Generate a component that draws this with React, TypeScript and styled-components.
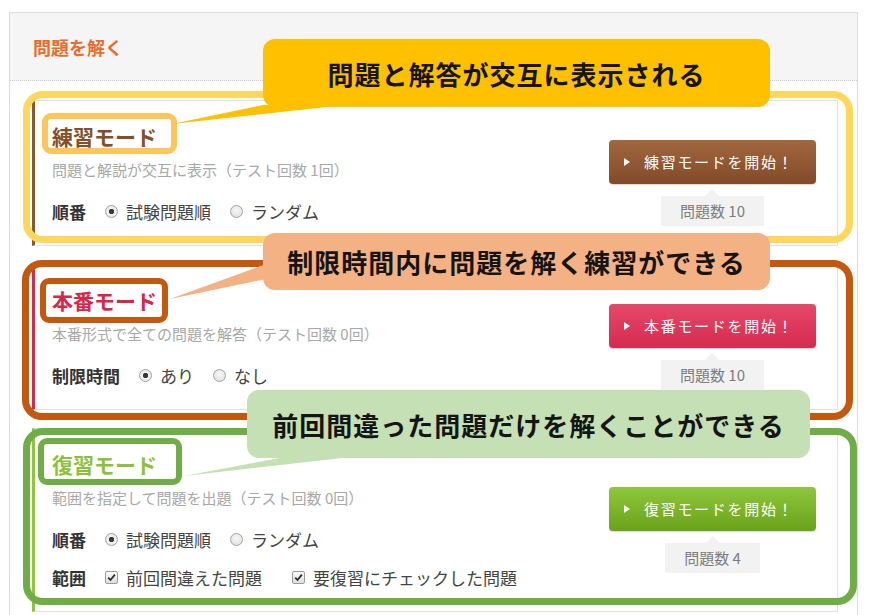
import React from "react";
import styled, { createGlobalStyle } from "styled-components";

const GlobalStyle = createGlobalStyle`
  html, body { margin: 0; padding: 0; background: #fff; }
  body {
    font-family: "Noto Sans CJK JP", "Noto Sans", sans-serif;
    color: #333;
  }
  *, *::before, *::after { box-sizing: border-box; }
`;

const Stage = styled.div`
  position: relative;
  width: 876px;
  height: 615px;
  overflow: hidden;
  padding: 12px 0 0 9px;
`;

const Panel = styled.section`
  width: 849px;
  height: 640px;
  border: 1px solid #dcdcdc;
  background: #fff;
`;

const PanelHeader = styled.header`
  height: 68px;
  display: flex;
  align-items: center;
  padding-left: 23px;
  background: #f5f5f5;
  border-bottom: 1px dotted #cdcdcd;
`;

const PanelTitle = styled.h2`
  margin: 0;
  font-size: 18px;
  line-height: 24px;
  font-weight: 700;
  color: #ea6c2c;
`;

const PanelBody = styled.div`
  padding: 19px 19px 0 22px;
`;

const ModeCard = styled.div<{ $accent: string }>`
  display: flex;
  justify-content: space-between;
  align-items: center;
  border: 1px solid #e1e1e1;
  border-left: 3px solid ${(p) => p.$accent};
  padding: 23px 21px 22px 17px;
  background: #fff;
  & + & {
    margin-top: 18px;
  }
`;

const ModeInfo = styled.div`
  display: flex;
  flex-direction: column;
`;

const ModeTitle = styled.h3<{ $color: string }>`
  margin: 0;
  font-size: 21px;
  line-height: 24px;
  font-weight: 700;
  color: ${(p) => p.$color};
`;

const ModeDesc = styled.p`
  margin: 12px 0 0;
  font-size: 15px;
  line-height: 20px;
  color: #a8a8a8;
`;

const OptionRow = styled.div`
  display: flex;
  align-items: center;
  height: 24px;
  margin-top: 19px;
  font-size: 17px;
  color: #444;
  & + & {
    margin-top: 14px;
  }
`;

const OptionLabel = styled.span`
  font-weight: 700;
  color: #333;
  margin-right: 19px;
`;

const Choice = styled.label<{ $space: number }>`
  display: flex;
  align-items: center;
  gap: 8px;
  margin-right: ${(p) => p.$space}px;
  white-space: nowrap;
`;

const Radio = styled.span<{ $on?: boolean }>`
  width: 13px;
  height: 13px;
  border-radius: 50%;
  border: 1px solid #a3a3a3;
  background: ${(p) =>
    p.$on
      ? "radial-gradient(circle, #3a3a3a 0 2.4px, #f3f3f3 3px, #e2e2e2 100%)"
      : "radial-gradient(circle at 50% 40%, #f7f7f7 0, #dcdcdc 100%)"};
  flex: none;
`;

const Check = styled.span`
  width: 13px;
  height: 13px;
  border-radius: 2px;
  border: 1px solid #9a9a9a;
  background: linear-gradient(#fbfbfb, #dedede);
  display: flex;
  align-items: center;
  justify-content: center;
  flex: none;
`;

const StartColumn = styled.div`
  display: flex;
  flex-direction: column;
  align-items: center;
  margin: 9px 0 -9px;
`;

const StartButton = styled.button<{ $from: string; $to: string }>`
  width: 207px;
  height: 44px;
  display: flex;
  align-items: center;
  gap: 14px;
  padding: 0 0 0 15px;
  border: none;
  border-radius: 4px;
  background: linear-gradient(${(p) => p.$from}, ${(p) => p.$to});
  box-shadow: 0 1px 1px rgba(0, 0, 0, 0.15);
  color: #fff;
  font-family: inherit;
  font-size: 15px;
  letter-spacing: 1.7px;
  cursor: pointer;
`;

const PlayMark = styled.span`
  width: 0;
  height: 0;
  border-left: 6px solid #fff;
  border-top: 4.5px solid transparent;
  border-bottom: 4.5px solid transparent;
`;

const CountTag = styled.div`
  position: relative;
  margin-top: 12px;
  height: 30px;
  padding: 0 19px;
  background: #f2f2f2;
  color: #7c7c7c;
  font-size: 15px;
  line-height: 30px;
  &::before {
    content: "";
    position: absolute;
    left: 50%;
    top: -7px;
    margin-left: -7px;
    border-left: 7px solid transparent;
    border-right: 7px solid transparent;
    border-bottom: 7px solid #f2f2f2;
  }
`;

/* ---------- annotation overlay ---------- */

const Ring = styled.div<{
  $x: number;
  $y: number;
  $w: number;
  $h: number;
  $c: string;
  $t: number;
  $r: number;
}>`
  position: absolute;
  left: ${(p) => p.$x}px;
  top: ${(p) => p.$y}px;
  width: ${(p) => p.$w}px;
  height: ${(p) => p.$h}px;
  border: ${(p) => p.$t}px solid ${(p) => p.$c};
  border-radius: ${(p) => p.$r}px;
  pointer-events: none;
`;

const Callout = styled.div<{
  $x: number;
  $y: number;
  $w: number;
  $h: number;
  $bg: string;
}>`
  position: absolute;
  left: ${(p) => p.$x}px;
  top: ${(p) => p.$y}px;
  width: ${(p) => p.$w}px;
  height: ${(p) => p.$h}px;
  background: ${(p) => p.$bg};
  border-radius: 12px;
  display: flex;
  align-items: center;
  justify-content: center;
  font-size: 26px;
  font-weight: 700;
  letter-spacing: 1px;
  color: #151515;
  white-space: nowrap;
`;

const TailLayer = styled.svg`
  position: absolute;
  left: 0;
  top: 0;
  pointer-events: none;
`;

const CheckIcon = () => (
  <svg width="9" height="9" viewBox="0 0 9 9">
    <path d="M1.2 4.6 L3.5 7 L7.9 1.6" fill="none" stroke="#2b2b2b" strokeWidth="1.8" />
  </svg>
);

type Mode = {
  accent: string;
  title: string;
  titleColor: string;
  desc: string;
  button: string;
  from: string;
  to: string;
  count: string;
  rows: React.ReactNode;
};

const modes: Mode[] = [
  {
    accent: "#8b5a2b",
    title: "練習モード",
    titleColor: "#84502a",
    desc: "問題と解説が交互に表示（テスト回数 1回）",
    button: "練習モードを開始！",
    from: "#a2673f",
    to: "#814a28",
    count: "問題数 10",
    rows: (
      <OptionRow>
        <OptionLabel>順番</OptionLabel>
        <Choice $space={19}>
          <Radio $on />
          試験問題順
        </Choice>
        <Choice $space={19}>
          <Radio />
          ランダム
        </Choice>
      </OptionRow>
    ),
  },
  {
    accent: "#d7284b",
    title: "本番モード",
    titleColor: "#d6274a",
    desc: "本番形式で全ての問題を解答（テスト回数 0回）",
    button: "本番モードを開始！",
    from: "#e6496b",
    to: "#d42b4e",
    count: "問題数 10",
    rows: (
      <OptionRow>
        <OptionLabel>制限時間</OptionLabel>
        <Choice $space={19}>
          <Radio $on />
          あり
        </Choice>
        <Choice $space={19}>
          <Radio />
          なし
        </Choice>
      </OptionRow>
    ),
  },
  {
    accent: "#8cc63f",
    title: "復習モード",
    titleColor: "#8cc23b",
    desc: "範囲を指定して問題を出題（テスト回数 0回）",
    button: "復習モードを開始！",
    from: "#8fc73b",
    to: "#69a31a",
    count: "問題数 4",
    rows: (
      <>
        <OptionRow>
          <OptionLabel>順番</OptionLabel>
          <Choice $space={19}>
            <Radio $on />
            試験問題順
          </Choice>
          <Choice $space={19}>
            <Radio />
            ランダム
          </Choice>
        </OptionRow>
        <OptionRow>
          <OptionLabel>範囲</OptionLabel>
          <Choice $space={30}>
            <Check>
              <CheckIcon />
            </Check>
            前回間違えた問題
          </Choice>
          <Choice $space={0}>
            <Check>
              <CheckIcon />
            </Check>
            要復習にチェックした問題
          </Choice>
        </OptionRow>
      </>
    ),
  },
];

export default function App() {
  return (
    <>
      <GlobalStyle />
      <Stage>
        <Panel>
          <PanelHeader>
            <PanelTitle>問題を解く</PanelTitle>
          </PanelHeader>
          <PanelBody>
            {modes.map((m) => (
              <ModeCard key={m.title} $accent={m.accent}>
                <ModeInfo>
                  <ModeTitle $color={m.titleColor}>{m.title}</ModeTitle>
                  <ModeDesc>{m.desc}</ModeDesc>
                  {m.rows}
                </ModeInfo>
                <StartColumn>
                  <StartButton $from={m.from} $to={m.to}>
                    <PlayMark />
                    {m.button}
                  </StartButton>
                  <CountTag>{m.count}</CountTag>
                </StartColumn>
              </ModeCard>
            ))}
          </PanelBody>
        </Panel>

        <Ring $x={23} $y={91} $w={830} $h={152} $c="#ffd75f" $t={7} $r={20} />
        <Ring $x={42} $y={113} $w={135} $h={41} $c="#fdc65a" $t={6} $r={9} />
        <Ring $x={22} $y={260} $w={831} $h={160} $c="#c4580f" $t={7} $r={20} />
        <Ring $x={40} $y={278} $w={128} $h={45} $c="#c4580f" $t={6} $r={9} />
        <Ring $x={23} $y={428} $w={834} $h={177} $c="#70ad47" $t={7} $r={20} />
        <Ring $x={38} $y={438} $w={144} $h={47} $c="#70ad47" $t={6} $r={9} />

        <TailLayer width="876" height="615" viewBox="0 0 876 615">
          <polygon points="263,105 345,105 172,124" fill="#ffc000" />
          <polygon points="266,264 266,279 170,299" fill="#f4b183" />
          <polygon points="290,456 360,456 184,476" fill="#c5e0b4" />
        </TailLayer>

        <Callout $x={263} $y={39} $w={507} $h={68} $bg="#ffc000">
          問題と解答が交互に表示される
        </Callout>
        <Callout $x={263} $y={233} $w={507} $h={57} $bg="#f4b183">
          制限時間内に問題を解く練習ができる
        </Callout>
        <Callout $x={247} $y={390} $w={563} $h={68} $bg="#c5e0b4">
          前回間違った問題だけを解くことができる
        </Callout>
      </Stage>
    </>
  );
}
